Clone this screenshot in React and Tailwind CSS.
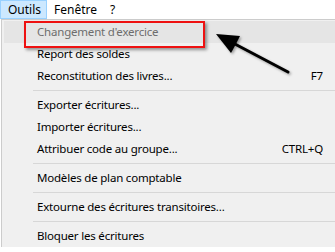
import React from 'react'

const items = [
  { label: "Changement d'exercice", disabled: true, active: true },
  { label: 'Report des soldes' },
  { label: 'Reconstitution des livres...', shortcut: 'F7' },
  { sep: true },
  { label: 'Exporter écritures...' },
  { label: 'Importer écritures...' },
  { label: 'Attribuer code au groupe...', shortcut: 'CTRL+Q' },
  { sep: true },
  { label: 'Modèles de plan comptable' },
  { sep: true },
  { label: 'Extourne des écritures transitoires...' },
  { sep: true },
  { label: 'Bloquer les écritures' },
]

const MenuRow = ({ item }) => {
  if (item.sep) {
    return (
      <div className="flex h-[7px] items-center pl-[29px]">
        <div className="h-px w-full bg-[#d7d7d7]" />
      </div>
    )
  }
  return (
    <div className={`flex h-[22px] items-center pl-[33px] pr-[12px] ${item.active ? 'bg-[#e5e5e5]' : ''}`}>
      <span className={`flex-1 ${item.disabled ? 'text-[#6d6d6d]' : 'text-black'}`}>{item.label}</span>
      {item.shortcut && <span className="text-black">{item.shortcut}</span>}
    </div>
  )
}

export default function App() {
  return (
    <div className="relative h-[252px] w-[335px] overflow-hidden bg-white text-[11.5px] leading-none tracking-[-0.2px]" style={{ fontFamily: '"Noto Sans", sans-serif' }}>
      {/* barre de menu */}
      <div className="flex h-[19px] items-stretch bg-white text-[12px] tracking-normal">
        <div className="flex items-center border border-[#99d1ff] bg-[#cce8ff] pl-[7px] pr-[5px]">Outils</div>
        <div className="flex items-center pl-[7px] pr-[11px]">Fenêtre</div>
        <div className="flex items-center px-[2px]">?</div>
      </div>

      {/* menu déroulant */}
      <div className="ml-px border-l border-t border-[#cccccc] bg-[#f0f0f0] pl-[2px] pt-px">
        {items.map((it, i) => <MenuRow key={i} item={it} />)}
      </div>

      {/* annotation */}
      <div className="absolute left-[24px] top-[21px] h-[27px] w-[181px] border-2 border-[#ee1111] shadow-[2px_2px_3px_rgba(0,0,0,0.4)]" />
      <svg className="absolute left-0 top-0" width="335" height="252" viewBox="0 0 335 252">
        <defs>
          <filter id="sh" x="-20%" y="-20%" width="140%" height="140%">
            <feDropShadow dx="1.5" dy="1.5" stdDeviation="1.2" floodOpacity="0.35" />
          </filter>
        </defs>
        <g filter="url(#sh)">
          <line x1="233" y1="43" x2="288" y2="72" stroke="#000" strokeWidth="3" strokeLinecap="round" />
          <polygon points="216,34 240,36 236,44 231,53" fill="#000" />
        </g>
      </svg>
    </div>
  )
}
